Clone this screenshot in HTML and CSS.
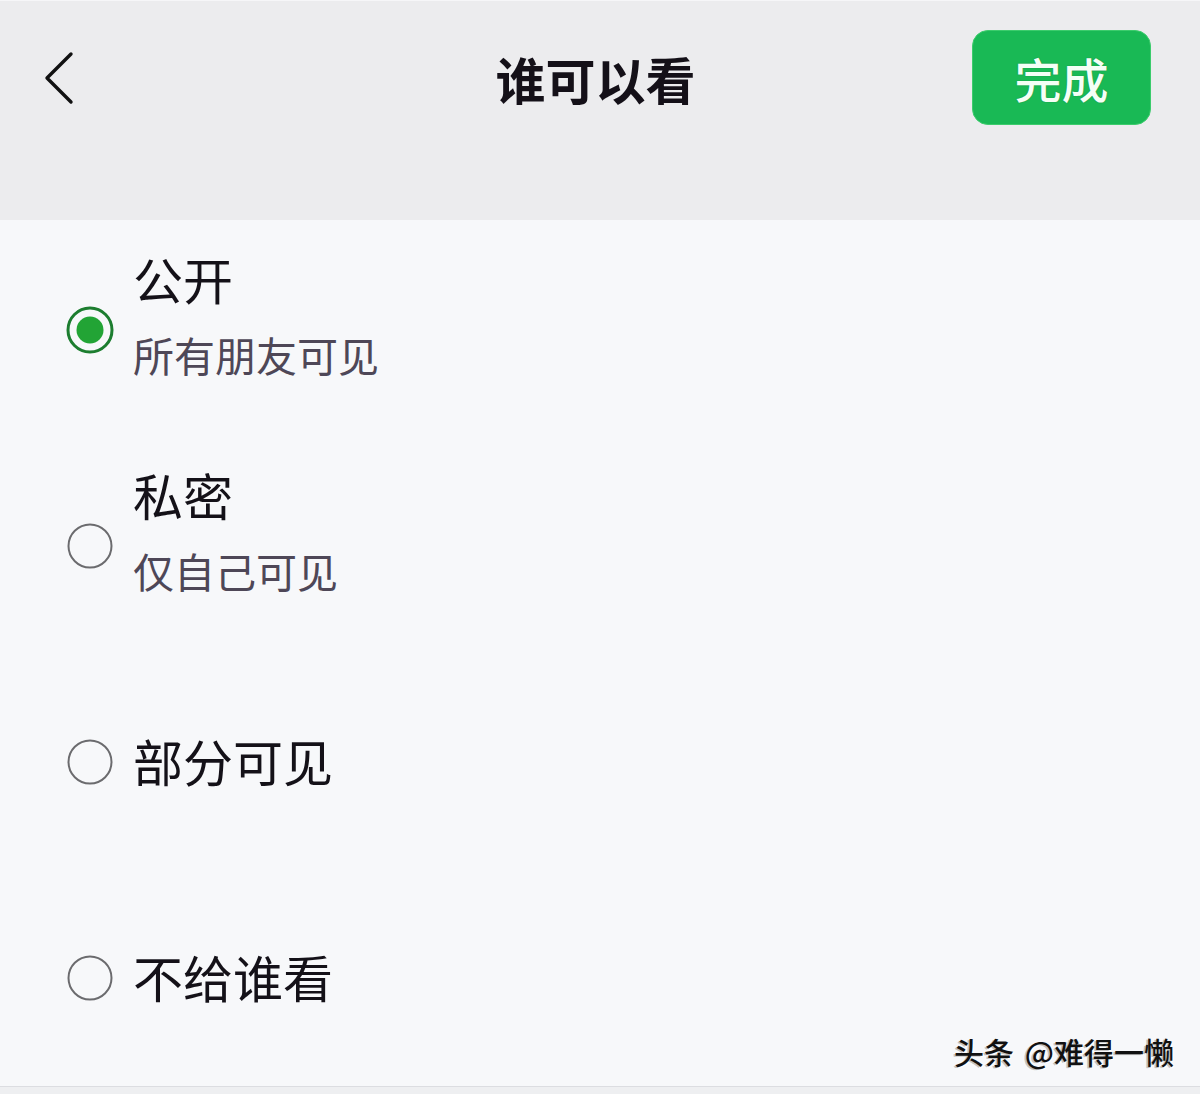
FILE: index.html
```html
<html>
<head>
    <meta charset="utf-8">
    <title>谁可以看</title>
    <link rel="stylesheet" href="styles.css">
</head>
<body>

<div id="page">

    <div class="header">
        <div class="navbar">
            <div class="back">
                <svg width="36" height="56" viewBox="0 0 36 56">
                    <polyline points="31,4 7,28 31,52" fill="none" stroke="#111" stroke-width="3.4" stroke-linecap="round" stroke-linejoin="round"/>
                </svg>
            </div>
            <div class="title">谁可以看</div>
            <div class="actions">
                <div class="done_btn">完成</div>
            </div>
        </div>
    </div>

    <div class="list">

        <div class="row">
            <div class="radio">
                <svg width="48" height="48" viewBox="0 0 48 48">
                    <circle cx="24" cy="24" r="22" fill="none" stroke="#1c7d2f" stroke-width="3"/>
                    <circle cx="24" cy="24" r="13.5" fill="#22a435"/>
                </svg>
            </div>
            <div class="text two_line">
                <div class="label">公开</div>
                <div class="sub">所有朋友可见</div>
            </div>
        </div>

        <div class="row">
            <div class="radio">
                <svg width="48" height="48" viewBox="0 0 48 48">
                    <circle cx="24" cy="24" r="21.5" fill="none" stroke="#6b6b6e" stroke-width="2"/>
                </svg>
            </div>
            <div class="text two_line">
                <div class="label">私密</div>
                <div class="sub">仅自己可见</div>
            </div>
        </div>

        <div class="row">
            <div class="radio">
                <svg width="48" height="48" viewBox="0 0 48 48">
                    <circle cx="24" cy="24" r="21.5" fill="none" stroke="#6b6b6e" stroke-width="2"/>
                </svg>
            </div>
            <div class="text">
                <div class="label">部分可见</div>
            </div>
        </div>

        <div class="row">
            <div class="radio">
                <svg width="48" height="48" viewBox="0 0 48 48">
                    <circle cx="24" cy="24" r="21.5" fill="none" stroke="#6b6b6e" stroke-width="2"/>
                </svg>
            </div>
            <div class="text">
                <div class="label">不给谁看</div>
            </div>
        </div>

    </div>

    <div class="bottom"></div>

    <div class="watermark">头条 @难得一懒</div>

</div>

</body>
</html>
```

FILE: styles.css
```css
html, body {
    margin: 0px;
    padding: 0px;
}

body {
    background: #f7f8fa;
    font-family: "Noto Sans CJK SC", "Noto Sans", sans-serif;
    color: #141118;
}

#page {
    position: relative;
    width: 1200px;
    height: 1094px;
    overflow: hidden;
}

/* top bar */

.header {
    height: 220px;
    background: #ececee;
    border-top: 1px solid #f6f6f8;
    box-sizing: border-box;
}

.navbar {
    height: 153px;
    display: grid;
    grid-template-columns: 1fr auto 1fr;
    align-items: center;
    padding: 0px 49px 0px 40px;
}

.back {
    display: flex;
    align-items: center;
}

.title {
    font-size: 50px;
    font-weight: 700;
    line-height: 60px;
    color: #141018;
}

.actions {
    display: flex;
    justify-content: flex-end;
}

.done_btn {
    width: 179px;
    height: 95px;
    box-sizing: border-box;
    border-radius: 16px;
    background: #19b955;
    border: 1px solid #3ccc6c;
    color: #f4fff6;
    font-size: 47px;
    font-weight: 500;
    line-height: 93px;
    text-align: center;
    text-shadow: 0px 0px 1px #0b7a33;
}

/* options */

.list {
    display: flex;
    flex-direction: column;
}

.row {
    height: 216px;
    display: flex;
    align-items: center;
    padding-left: 66px;
    gap: 19px;
}

.radio {
    width: 48px;
    height: 48px;
    margin-top: 4px;
}

.radio svg {
    display: block;
}

.text.two_line {
    padding-bottom: 30px;
}

.label {
    font-size: 50px;
    line-height: 60px;
    color: #141118;
}

.sub {
    margin-top: 21px;
    font-size: 41px;
    line-height: 50px;
    color: #4e4757;
}

.bottom {
    height: 10px;
    margin-top: 2px;
    background: #eeeff1;
    border-top: 1px solid #dcdde1;
}

.watermark {
    position: absolute;
    right: 26px;
    bottom: 25px;
    font-size: 30px;
    font-weight: 500;
    line-height: 36px;
    word-spacing: 4px;
    color: #111;
    text-shadow: -2px 1px 0px rgba(0, 0, 0, 0.22), 1px 1px 0px #ffffff;
}
```
